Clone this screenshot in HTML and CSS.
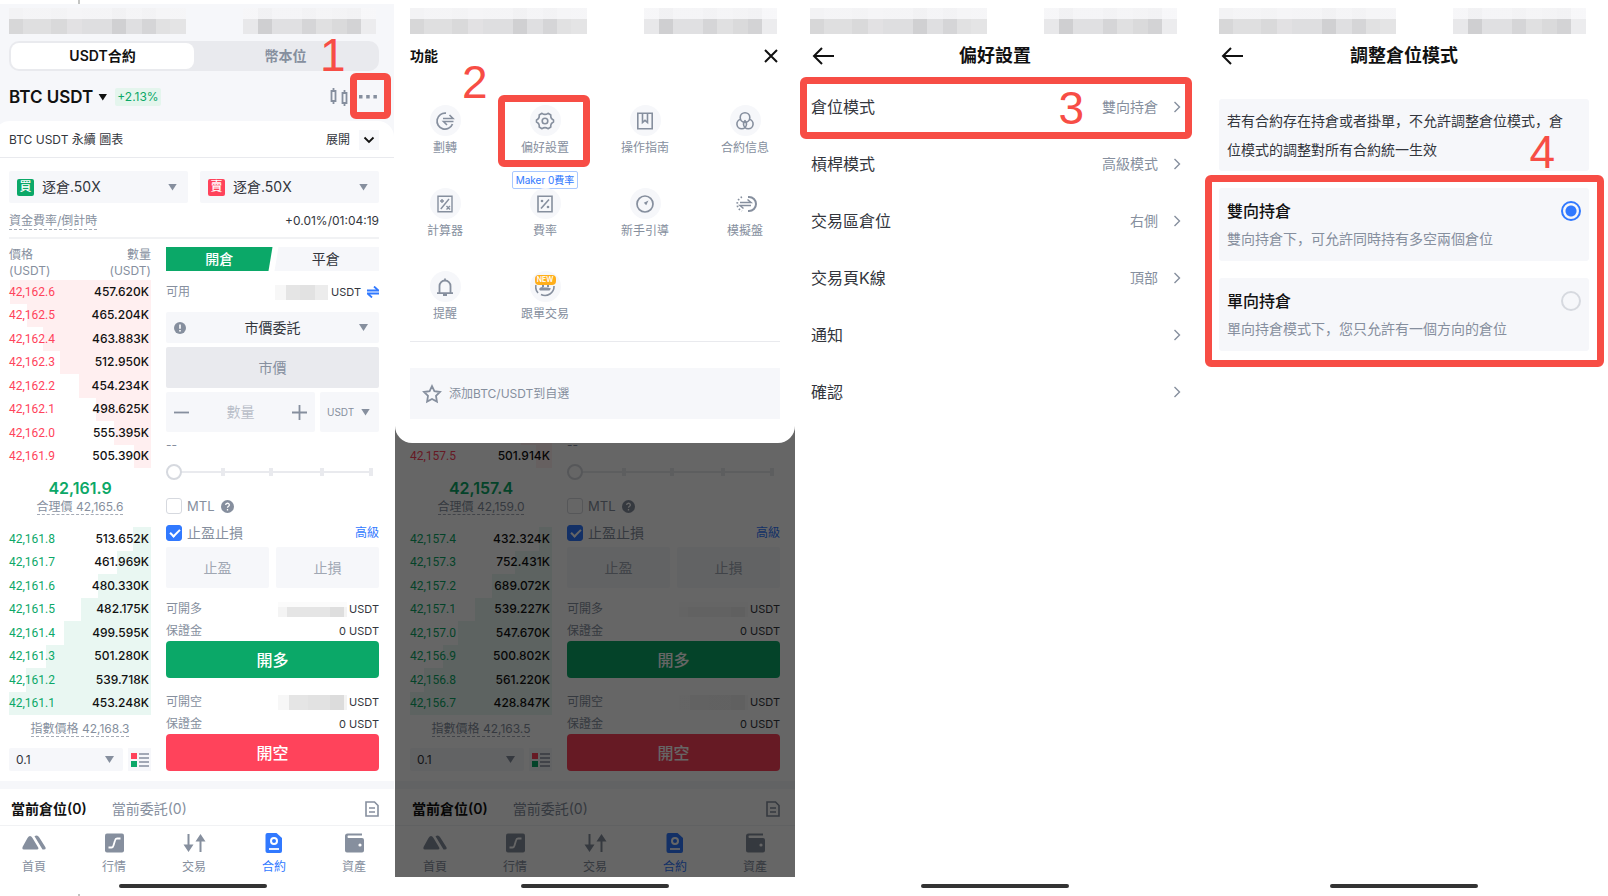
FILE: index.html
```html
<!DOCTYPE html>
<html lang="zh">
<head>
    <meta charset="UTF-8">
    <meta name="viewport" content="width=device-width, initial-scale=1.0">
    <title>調整倉位模式</title>
    <link rel="stylesheet" href="styles.css">
</head>
<body>
    <!-- Iconos -->
    <svg class="sprite" aria-hidden="true">
        <symbol id="i-candles" viewBox="0 0 20 18"><path d="M4.500 0v3M4.500 13v3M15.500 2v3M15.500 15v3M2.500 3h4v10h-4zM13.500 5h4v10h-4z" fill="none" stroke="currentColor" stroke-width="1.800"/></symbol>
        <symbol id="i-dots" viewBox="0 0 20 4"><path d="M1 0h3.500v3.500H1zM8.200 0h3.500v3.500H8.200zM15.400 0h3.500v3.500h-3.500z" fill="currentColor"/></symbol>
        <symbol id="i-down" viewBox="0 0 12 8"><path d="M1.500 1.500 6 6l4.500-4.500" fill="none" stroke="currentColor" stroke-width="1.800"/></symbol>
        <symbol id="i-right" viewBox="0 0 8 12"><path d="M1.500 1 6.500 6l-5 5" fill="none" stroke="currentColor" stroke-width="1.400"/></symbol>
        <symbol id="i-back" viewBox="0 0 22 18"><path d="M10 1 2 9l8 8M2 9h20" fill="none" stroke="currentColor" stroke-width="2"/></symbol>
        <symbol id="i-close" viewBox="0 0 14 14"><path d="M1 1l12 12M13 1 1 13" fill="none" stroke="currentColor" stroke-width="2"/></symbol>
        <symbol id="i-swap" viewBox="0 0 12 12"><path d="M0 4.500h11.500L7 .5M12 7.500H.5L5 11.500" fill="none" stroke="currentColor" stroke-width="1.800"/></symbol>
        <symbol id="i-info" viewBox="0 0 12 12"><circle cx="6" cy="6" r="6" fill="currentColor"/><path d="M6 2.500v4.200M6 8v1.600" stroke="#fff" stroke-width="1.600"/></symbol>
        <symbol id="i-help" viewBox="0 0 12 12"><circle cx="6" cy="6" r="6" fill="currentColor"/><path d="M4.300 4.700c0-2.300 3.400-2.200 3.400-.2C7.700 5.800 6 5.800 6 7.200M6 8.300v1.400" fill="none" stroke="#fff" stroke-width="1.200"/></symbol>
        <symbol id="i-minus" viewBox="0 0 15 15"><path d="M0 7.500h15" stroke="currentColor" stroke-width="1.800"/></symbol>
        <symbol id="i-plus" viewBox="0 0 15 15"><path d="M0 7.500h15M7.500 0v15" stroke="currentColor" stroke-width="1.800"/></symbol>
        <symbol id="i-book" viewBox="0 0 18 14"><path fill="#ff435b" d="M0 0h6v6H0z"/><path fill="#0ba868" d="M0 8h6v6H0z"/><path d="M8 1h10M8 5h10M8 9h10M8 13h10" stroke="#868f9e" stroke-width="1.400"/></symbol>
        <symbol id="i-doc" viewBox="0 0 14 16"><path d="M1 1h8.500L13 4.500V15H1zM4 7h6M4 11h6" fill="none" stroke="currentColor" stroke-width="1.600"/></symbol>
        <symbol id="i-home" viewBox="0 0 24 20"><path d="M5.500 5Q8 .8 10.500 5L16.200 14.500Q17 16.500 15 16.500H2Q-.5 16.500 .8 13.500zM12.500 3.200Q15.500 1.500 17.300 4.500l6 9.500q1.300 2.500-1.500 2.500h-1.300z" fill="currentColor"/></symbol>
        <symbol id="i-market" viewBox="0 0 24 20"><rect x="3" y=".5" width="19" height="19" rx="2" fill="currentColor"/><path d="M6.500 14.500h3q1.500 0 2-2l1.500-5q.5-2 2-2h3.500" fill="none" stroke="#fff" stroke-width="1.800"/></symbol>
        <symbol id="i-trade" viewBox="0 0 24 20"><path d="M6.500 1v12M18.500 19V7" stroke="currentColor" stroke-width="2"/><path d="M1.500 11.500h10l-5 7.500zM13.500 8.500h10L18.500 1z" fill="currentColor"/></symbol>
        <symbol id="i-futures" viewBox="0 0 24 20"><path d="M5.500 0h9L20 5v13q0 2-2 2H5.500q-2 0-2-2V2q0-2 2-2z" fill="currentColor"/><circle cx="12" cy="8" r="3" fill="none" stroke="#fff" stroke-width="2"/><path d="M7 16h10" stroke="#fff" stroke-width="1.800"/></symbol>
        <symbol id="i-assets" viewBox="0 0 24 20"><path d="M5.500.5H20v2H6.500q-1 0-1 1.200T6.500 5H20q2 0 2 2v10.500q0 2-2 2H5q-2 0-2-2V3Q3 .5 5.500.5z" fill="currentColor"/><circle cx="18" cy="12" r="1.600" fill="#fff"/></symbol>
        <symbol id="i-transfer" viewBox="0 0 20 20"><path d="M11 2.200A8 8 0 1 0 17.500 13" fill="none" stroke="currentColor" stroke-width="1.700"/><path d="M8 7.500h10L14.500 4M18.500 10.500h-10L12 14" fill="none" stroke="currentColor" stroke-width="1.600"/></symbol>
        <symbol id="i-gear" viewBox="0 0 20 20"><path d="M7 2.300Q10 4.500 13 2.300L15.800 4Q15.300 7.500 18.500 9v2Q15.300 12.500 15.800 16L13 17.700Q10 15.500 7 17.700L4.200 16Q4.700 12.500 1.500 11v-2Q4.700 7.500 4.200 4z" fill="none" stroke="currentColor" stroke-width="1.600" stroke-linejoin="round"/><circle cx="10" cy="10" r="2.800" fill="none" stroke="currentColor" stroke-width="1.600"/></symbol>
        <symbol id="i-guide" viewBox="0 0 20 20"><path d="M2.800 2.300h14.400v15.400H2.800zM7.500 2.500v9L10 9.300l2.500 2.200v-9" fill="none" stroke="currentColor" stroke-width="1.600"/></symbol>
        <symbol id="i-rings" viewBox="0 0 20 20"><g fill="none" stroke="currentColor" stroke-width="1.600"><circle cx="10" cy="6.500" r="4.800"/><path d="M5.800 8.300a4.800 4.800 0 1 0 5.700 5 4.800 4.800 0 0 0-2-4"/><path d="M14.200 8.300a4.800 4.800 0 1 1-5.700 5 4.800 4.800 0 0 1 2-4"/></g></symbol>
        <symbol id="i-calc" viewBox="0 0 20 20"><path d="M3 2.300h14v15.400H3zM5.800 15 14 5M5 7h4M7 5v4M11.500 12l3.500 3.500M15 12l-3.500 3.500" fill="none" stroke="currentColor" stroke-width="1.400"/></symbol>
        <symbol id="i-fee" viewBox="0 0 20 20"><path d="M3 2.300h14v15.400H3zM6 14.500l8-9" fill="none" stroke="currentColor" stroke-width="1.600"/><circle cx="7" cy="7" r="1.300" fill="currentColor"/><circle cx="13" cy="13" r="1.300" fill="currentColor"/></symbol>
        <symbol id="i-gauge" viewBox="0 0 20 20"><circle cx="10" cy="10" r="8" fill="none" stroke="currentColor" stroke-width="1.700"/><path d="m13.500 6.500-2.300 4.700-2.400-2.400z" fill="currentColor"/></symbol>
        <symbol id="i-demo" viewBox="0 0 24 20"><path d="M15 3h1a7 7 0 0 1 0 14h-1" fill="none" stroke="currentColor" stroke-width="2"/><path d="M9 3A7.500 7.500 0 0 0 9 17" fill="none" stroke="currentColor" stroke-width="1.800" stroke-dasharray="1.500 2"/><path d="M7 8.500h11l-3.500-3M18 11.500H7l3.500 3" fill="none" stroke="currentColor" stroke-width="1.500"/></symbol>
        <symbol id="i-bell" viewBox="0 0 20 20"><path d="M4.500 16v-7a5.500 5.500 0 0 1 11 0v7M2 16.200h16M10 1.500v2M8 18h4" fill="none" stroke="currentColor" stroke-width="1.800"/></symbol>
        <symbol id="i-copy" viewBox="0 0 20 20"><path d="M1 8a9 9 0 0 0 2 8M6 17.500A9 9 0 0 0 19 9" fill="none" stroke="currentColor" stroke-width="1.600"/><path d="M4 12q2-3 5-1.500h4l3 1-1.500 2H5zM7 8h2v2H7zM12 8h2v2h-2z" fill="currentColor"/></symbol>
        <symbol id="i-star" viewBox="0 0 20 20"><path d="m10 2.200 2.400 5 5.600.8-4 3.900.9 5.600-4.900-2.600-4.900 2.600.9-5.600-4-3.900 5.600-.8z" fill="none" stroke="currentColor" stroke-width="1.800"/></symbol>
    </svg>

    <!-- Pantalla de trading, se clona en los pasos 1 y 2 -->
    <template id="trade-template">
        <header class="trade-header">
            <div class="status"><span class="mosaic mosaic-left"></span><span class="mosaic mosaic-right"></span></div>
            <div class="segment">
                <button class="active">USDT合約</button>
                <button>幣本位</button>
            </div>
            <div class="pair">
                <button class="pair-name">BTC USDT<i class="caret"></i></button>
                <span class="change">+2.13%</span>
                <button class="pair-icon" aria-label="K線"><svg width="20" height="18"><use href="#i-candles"/></svg></button>
                <button class="pair-icon more" aria-label="更多"><svg width="20" height="4"><use href="#i-dots"/></svg></button>
            </div>
        </header>
        <div class="chart-bar">
            <span>BTC USDT 永續 圖表</span>
            <span class="expand">展開</span>
            <button class="expand-button" aria-label="展開圖表"><svg width="12" height="8"><use href="#i-down"/></svg></button>
        </div>
        <div class="modes">
            <label class="select-box mode"><b class="side buy">買</b><select aria-label="買"><option>逐倉.50X</option></select><i class="caret"></i></label>
            <label class="select-box mode"><b class="side sell">賣</b><select aria-label="賣"><option>逐倉.50X</option></select><i class="caret"></i></label>
        </div>
        <div class="funding"><span class="dashed">資金費率/倒計時</span><span>+0.01%/01:04:19</span></div>
        <div class="trade-grid">
            <section class="book">
                <div class="book-head"><span>價格<br>(USDT)</span><span>數量<br>(USDT)</span></div>
                <div class="rows asks"></div>
                <div class="last-price"></div>
                <div class="book-note"><span class="dashed fair"></span></div>
                <div class="rows bids"></div>
                <div class="book-note index-note"><span class="dashed index"></span></div>
                <div class="book-tools">
                    <label class="select-box"><select aria-label="精度"><option>0.1</option></select><i class="caret"></i></label>
                    <button class="book-view" aria-label="盤口"><svg width="18" height="14"><use href="#i-book"/></svg></button>
                </div>
            </section>
            <section class="order">
                <div class="order-tabs"><button class="active">開倉</button><button>平倉</button></div>
                <div class="line available"><span>可用</span><i class="mask wide-mask"></i><em>USDT</em><svg class="swap" width="12" height="12"><use href="#i-swap"/></svg></div>
                <label class="select-box order-type"><svg width="12" height="12"><use href="#i-info"/></svg><select aria-label="委託類型"><option>市價委託</option></select><i class="caret"></i></label>
                <input class="field market" type="text" placeholder="市價" aria-label="市價" disabled>
                <div class="quantity">
                    <div class="stepper">
                        <button aria-label="減少"><svg width="15" height="15"><use href="#i-minus"/></svg></button>
                        <input type="text" placeholder="數量" aria-label="數量">
                        <button aria-label="增加"><svg width="15" height="15"><use href="#i-plus"/></svg></button>
                    </div>
                    <label class="select-box unit"><select aria-label="單位"><option>USDT</option></select><i class="caret"></i></label>
                </div>
                <div class="estimate">--</div>
                <input class="slider" type="range" min="0" max="100" value="0" aria-label="倉位比例">
                <div class="check-row"><label><input type="checkbox">MTL</label><svg width="13" height="13"><use href="#i-help"/></svg></div>
                <div class="check-row tpsl"><label><input type="checkbox" checked>止盈止損</label><a href="#">高級</a></div>
                <div class="tpsl-fields"><input class="field" type="text" placeholder="止盈" aria-label="止盈"><input class="field" type="text" placeholder="止損" aria-label="止損"></div>
                <div class="line can-open"><span>可開多</span><i class="mask"></i><em>USDT</em></div>
                <div class="line margin"><span>保證金</span><em>0 USDT</em></div>
                <button class="submit long">開多</button>
                <div class="line can-short"><span>可開空</span><i class="mask"></i><em>USDT</em></div>
                <div class="line margin"><span>保證金</span><em>0 USDT</em></div>
                <button class="submit short">開空</button>
            </section>
        </div>
        <div class="positions">
            <button class="active">當前倉位(0)</button>
            <button>當前委託(0)</button>
            <button class="history" aria-label="歷史"><svg width="14" height="16"><use href="#i-doc"/></svg></button>
        </div>
        <nav class="tabbar">
            <a href="#"><svg width="24" height="20"><use href="#i-home"/></svg>首頁</a>
            <a href="#"><svg width="24" height="20"><use href="#i-market"/></svg>行情</a>
            <a href="#"><svg width="24" height="20"><use href="#i-trade"/></svg>交易</a>
            <a href="#" class="active"><svg width="24" height="20"><use href="#i-futures"/></svg>合約</a>
            <a href="#"><svg width="24" height="20"><use href="#i-assets"/></svg>資產</a>
        </nav>
    </template>

    <main class="steps">
        <section class="step step-1">
            <div class="trade" data-book="first"></div>
            <div class="home-bar"></div>
        </section>

        <section class="step step-2">
            <div class="trade dimmed" data-book="second"></div>
            <div class="sheet">
                <div class="status"><span class="mosaic mosaic-left"></span><span class="mosaic mosaic-right"></span></div>
                <div class="sheet-head"><h2>功能</h2><button aria-label="關閉"><svg width="14" height="14"><use href="#i-close"/></svg></button></div>
                <div class="functions">
                    <a href="#"><span class="circle"><svg width="20" height="20"><use href="#i-transfer"/></svg></span>劃轉</a>
                    <a href="#"><span class="circle"><svg width="20" height="20"><use href="#i-gear"/></svg></span>偏好設置<span class="highlight"></span><span class="number">2</span></a>
                    <a href="#"><span class="circle"><svg width="20" height="20"><use href="#i-guide"/></svg></span>操作指南</a>
                    <a href="#"><span class="circle"><svg width="20" height="20"><use href="#i-rings"/></svg></span>合約信息</a>
                    <a href="#"><span class="circle"><svg width="20" height="20"><use href="#i-calc"/></svg></span>計算器</a>
                    <a href="#"><span class="tag">Maker 0費率</span><span class="circle"><svg width="20" height="20"><use href="#i-fee"/></svg></span>費率</a>
                    <a href="#"><span class="circle"><svg width="20" height="20"><use href="#i-gauge"/></svg></span>新手引導</a>
                    <a href="#"><span class="circle plain"><svg width="24" height="20"><use href="#i-demo"/></svg></span>模擬盤</a>
                    <a href="#"><span class="circle"><svg width="20" height="20"><use href="#i-bell"/></svg></span>提醒</a>
                    <a href="#"><span class="circle"><svg width="20" height="20"><use href="#i-copy"/></svg><span class="new">NEW</span></span>跟單交易</a>
                </div>
                <button class="favorite"><svg width="20" height="20"><use href="#i-star"/></svg>添加BTC/USDT到自選</button>
            </div>
            <div class="home-bar"></div>
        </section>

        <section class="step step-3">
            <div class="status"><span class="mosaic mosaic-left"></span><span class="mosaic mosaic-right"></span></div>
            <div class="title-bar"><button aria-label="返回"><svg width="22" height="18"><use href="#i-back"/></svg></button><h1>偏好設置</h1></div>
            <div class="settings">
                <a href="#">倉位模式<span>雙向持倉</span><svg width="8" height="12"><use href="#i-right"/></svg><i class="highlight"></i><i class="number">3</i></a>
                <a href="#">槓桿模式<span>高級模式</span><svg width="8" height="12"><use href="#i-right"/></svg></a>
                <a href="#">交易區倉位<span>右側</span><svg width="8" height="12"><use href="#i-right"/></svg></a>
                <a href="#">交易頁K線<span>頂部</span><svg width="8" height="12"><use href="#i-right"/></svg></a>
                <a href="#">通知<span></span><svg width="8" height="12"><use href="#i-right"/></svg></a>
                <a href="#">確認<span></span><svg width="8" height="12"><use href="#i-right"/></svg></a>
            </div>
            <div class="home-bar"></div>
        </section>

        <section class="step step-4">
            <div class="status"><span class="mosaic mosaic-left"></span><span class="mosaic mosaic-right"></span></div>
            <div class="title-bar"><button aria-label="返回"><svg width="22" height="18"><use href="#i-back"/></svg></button><h1>調整倉位模式</h1></div>
            <p class="note">若有合約存在持倉或者掛單，不允許調整倉位模式，倉位模式的調整對所有合約統一生效</p>
            <div class="options">
                <label class="option"><strong>雙向持倉</strong><input type="radio" name="position-mode" checked><small>雙向持倉下，可允許同時持有多空兩個倉位</small></label>
                <label class="option"><strong>單向持倉</strong><input type="radio" name="position-mode"><small>單向持倉模式下，您只允許有一個方向的倉位</small></label>
                <i class="highlight"></i><i class="number">4</i>
            </div>
            <div class="home-bar"></div>
        </section>
    </main>
    <script src="script.js"></script>
</body>
</html>
```
FILE: styles.css
```css
* {
    box-sizing: border-box;
}

body {
    margin: 0;
    background: #fff;
    color: #33363d;
    font-family: Inter, "Noto Sans CJK SC", sans-serif;
    font-size: 12px;
    line-height: 16px;
}

button, input, select {
    font: inherit;
    color: inherit;
    background: none;
    border: none;
    margin: 0;
    padding: 0;
    border-radius: 0;
}

button {
    cursor: pointer;
}

select {
    appearance: none;
}

a {
    color: inherit;
    text-decoration: none;
}

i, em {
    font-style: normal;
}

h1, h2, p {
    margin: 0;
}

svg {
    display: block;
    flex: none;
}

.sprite {
    position: absolute;
    width: 0;
    height: 0;
}

.steps {
    display: grid;
    grid-template-columns: minmax(0, 395fr) minmax(0, 400fr) minmax(0, 409fr) minmax(0, 404fr);
    min-height: 100vh;
}

.step {
    position: relative;
    display: flex;
    flex-direction: column;
    padding-top: 4px;
    overflow: hidden;
}

/* La primera captura viene recortada por la izquierda */
.step-1 > * {
    margin-left: -6px;
    margin-right: 1px;
}

.step-1::before,
.step-1::after {
    content: "";
    position: absolute;
    left: 78px;
    top: 0;
    width: 2px;
    height: 4px;
    background: #c4c5c3;
}

.step-1::after {
    top: auto;
    bottom: 0;
    height: 2px;
}

.step-3 {
    padding-right: 9px;
}

.step-4 {
    padding-right: 4px;
}

.home-bar {
    width: 148px;
    height: 4px;
    margin: auto auto 8px;
    border-radius: 2px;
    background: #333;
}

.step-1 > .home-bar {
    margin: auto auto 8px 119px;
}

/* Barra de estado pixelada */
.status {
    display: flex;
    justify-content: space-between;
    padding: 4px 18px 0 15px;
}

.mosaic {
    height: 26px;
    background:
        linear-gradient(rgba(250, 250, 252, 0.8) 11px, transparent 11px),
        linear-gradient(90deg, #d7d7d8 8%, #dfdfe0 8% 24%, #d9d9da 24% 33%, #e2e1e3 33% 41%, #dedee0 41% 58%, #d0d0d2 58% 66%, #dfdfe1 66% 75%, #d5d5d7 75% 83%, #e1e1e2 83% 91%, #e4e4e5 91%);
}

.mosaic-left {
    width: 177px;
}

.mosaic-right {
    width: 133px;
    background:
        linear-gradient(rgba(250, 250, 252, 0.8) 11px, transparent 11px),
        linear-gradient(90deg, #e8e8ea 11%, #cfcfd1 11% 22%, #e0e0e2 22% 44%, #d5d5d7 44% 55%, #e0e0e1 55% 67%, #dadadb 67% 78%, #d3d3d5 78% 89%, #ececee 89%);
}

/* Marcas rojas */
.highlight {
    position: absolute;
    border: 7px solid #f74d45;
    border-radius: 6px;
    pointer-events: none;
}

.number {
    position: absolute;
    color: #f74d45;
    font: 46px/46px "Liberation Sans", sans-serif;
}

.caret {
    width: 9px;
    height: 7px;
    background: #868f9e;
    clip-path: polygon(0 0, 100% 0, 50% 100%);
    flex: none;
}

/* Pantalla de trading */
.trade {
    position: relative;
    background: #fff;
}

.dimmed::after {
    content: "";
    position: absolute;
    inset: 0;
    background: rgba(0, 0, 0, 0.6);
}

/* Lo que tapa el menú no se pinta */
.dimmed .trade-header,
.dimmed .chart-bar,
.dimmed .modes,
.dimmed .funding,
.dimmed .book-head,
.dimmed .order-tabs,
.dimmed .available,
.dimmed .order-type,
.dimmed .market,
.dimmed .quantity {
    visibility: hidden;
}

.trade-header {
    background: #f6f7fa;
    height: 133px;
}

.segment {
    display: flex;
    height: 30px;
    margin: 7px 15px 0;
    padding: 2px;
    border-radius: 10px;
    background: #e9eaee;
    font-size: 14px;
    font-weight: 600;
    color: #868f9e;
}

.segment button {
    flex: 1;
    border-radius: 8px;
}

.segment .active {
    background: #fff;
    color: #111;
}

.pair {
    display: flex;
    align-items: center;
    height: 52px;
    padding: 0 16px 0 15px;
}

.pair-name {
    display: flex;
    align-items: center;
    gap: 5px;
    font-size: 17px;
    font-weight: 600;
    color: #111;
}

.pair-name .caret {
    background: #111;
}

.change {
    margin-left: 8px;
    margin-right: auto;
    padding: 1px 2px;
    border-radius: 2px;
    background: #e4f5ed;
    color: #0ba868;
}

.pair-icon {
    color: #868f9e;
}

.more {
    position: relative;
    margin-left: 9px;
}

.more .highlight {
    inset: -22px -13px -20px -8px;
}

.more .number {
    left: -38px;
    top: -63px;
}

.chart-bar {
    display: flex;
    align-items: center;
    height: 37px;
    margin-top: -16px;
    padding: 2px 15px 0;
    border-bottom: 1px solid #e9eaee;
    border-radius: 16px 16px 0 0;
    background: #fff;
}

.expand {
    margin-left: auto;
}

.expand-button {
    display: grid;
    place-items: center;
    width: 20px;
    height: 20px;
    margin-left: 9px;
    background: #f6f7fa;
    color: #111;
}

.select-box {
    display: flex;
    align-items: center;
    background: #f6f7fa;
    border-radius: 2px;
}

.select-box select {
    flex: 1;
    min-width: 0;
}

.modes {
    display: grid;
    grid-template-columns: 1fr 1fr;
    gap: 12px;
    padding: 13px 15px 0;
}

.mode {
    height: 32px;
    padding: 0 11px 0 8px;
    gap: 8px;
    font-size: 14px;
}

.side {
    width: 17px;
    height: 17px;
    border-radius: 2px;
    color: #fff;
    font-size: 12px;
    font-weight: 500;
    text-align: center;
}

.buy {
    background: #0ba868;
}

.sell {
    background: #ff435b;
}

.funding {
    display: flex;
    justify-content: space-between;
    margin: 10px 15px 0;
    padding-bottom: 7px;
    border-bottom: 2px solid #f1f2f4;
}

.dashed {
    border-bottom: 1px dashed #a5abb6;
    color: #868f9e;
}

.trade-grid {
    display: grid;
    grid-template-columns: minmax(0, 142fr) minmax(0, 213fr);
    gap: 15px;
    padding: 8px 15px 10px;
}

.book-head {
    display: flex;
    justify-content: space-between;
    margin-bottom: 1px;
    color: #868f9e;
}

.book-head span:last-child {
    text-align: right;
}

.rows {
    display: flex;
    flex-direction: column;
    height: 188px;
}

.book-row {
    flex: 1;
    position: relative;
    display: flex;
    justify-content: space-between;
    align-items: center;
    padding-right: 2px;
    color: #111;
    font-weight: 500;
}

.book-row span {
    position: relative;
}

.book-row .price {
    font-family: Roboto, sans-serif;
    font-weight: 400;
}

.depth {
    position: absolute;
    right: 0;
    top: 0;
    bottom: 0;
}

.asks .price {
    color: #ff435b;
}

.asks .depth {
    background: #ffeff0;
}

.bids .price {
    color: #0ba868;
}

.bids .depth {
    background: #e9f7f2;
}

.last-price {
    margin-top: 10px;
    color: #0ba868;
    font-size: 16px;
    font-weight: 600;
    line-height: 20px;
    text-align: center;
}

.book-note {
    height: 16px;
    margin-top: 1px;
    margin-bottom: 12px;
    text-align: center;
}

.index-note {
    margin-top: 6px;
    margin-bottom: 11px;
}

.book-tools {
    display: flex;
    gap: 5px;
}

.book-tools .select-box {
    flex: 1;
    min-width: 0;
    height: 23px;
    padding: 0 9px 0 7px;
}

.book-view {
    display: grid;
    place-items: center;
    width: 23px;
    background: #f6f7fa;
}

.order {
    display: flex;
    flex-direction: column;
}

.order-tabs {
    display: grid;
    grid-template-columns: 1fr 1fr;
    height: 24px;
    font-size: 14px;
}

.order-tabs button {
    background: #f6f7fa;
    clip-path: polygon(6px 0, 100% 0, 100% 100%, 2px 100%);
}

.order-tabs .active {
    background: #0ba868;
    color: #fff;
    font-weight: 500;
    clip-path: polygon(0 0, 100% 0, calc(100% - 4px) 100%, 0 100%);
}

.line {
    display: flex;
    align-items: center;
    height: 16px;
}

.line span {
    margin-right: auto;
    color: #868f9e;
}

.line em {
    font-size: 11px;
}

.available {
    margin: 13px 0 12px;
}

.mask {
    width: 69px;
    height: 15px;
    margin-right: 2px;
    background: linear-gradient(90deg, #f7f7f7 16%, #e5e5e5 16% 44%, #e2e2e2 44% 76%, #dcdcdc 76% 96%, #f3f3f3 96%);
}

.can-open .mask {
    background: linear-gradient(#fbfbfb 5px, transparent 5px), linear-gradient(90deg, #f4f4f4 13%, #e5e5e5 13% 76%, #dedede 76% 96%, #f3f3f3 96%);
}

.wide-mask {
    width: 53px;
    margin-right: 3px;
    background: linear-gradient(90deg, #f7f7f7 20%, #e5e5e5 20% 48%, #e2e2e2 48% 76%, #ececec 76%);
}

.dimmed .mask {
    opacity: 0.4;
}

.swap {
    margin-left: 6px;
    color: #3179ff;
}

.order-type {
    height: 31px;
    padding: 0 11px 0 8px;
    font-size: 14px;
    color: #868f9e;
}

.order-type select {
    color: #33363d;
    text-align: center;
    text-align-last: center;
}

.field {
    width: 100%;
    min-width: 0;
    height: 41px;
    border-radius: 2px;
    background: #f6f7fa;
    font-size: 14px;
    text-align: center;
}

.field::placeholder {
    color: #a0a7b3;
}

.market {
    margin: 4px 0;
    background: #e9eaee;
}

.market::placeholder {
    color: #868f9e;
}

.quantity {
    display: flex;
    gap: 5px;
    height: 40px;
}

.stepper {
    flex: 1;
    display: flex;
    align-items: center;
    min-width: 0;
    padding: 0 8px;
    border-radius: 2px;
    background: #f6f7fa;
    color: #868f9e;
}

.stepper input {
    flex: 1;
    min-width: 0;
    font-size: 14px;
    text-align: center;
}

.stepper input::placeholder {
    color: #b9bec8;
}

.unit {
    flex: none;
    width: 59px;
    padding: 0 9px 0 7px;
    color: #868f9e;
    font-size: 10px;
}

.estimate {
    margin-top: 5px;
    color: #868f9e;
}

.slider {
    appearance: none;
    width: 97%;
    height: 16px;
    margin: 11px 0 18px;
    background:
        linear-gradient(#e9eaee, #e9eaee) 27% 50% / 4px 8px no-repeat,
        linear-gradient(#e9eaee, #e9eaee) 51% 50% / 4px 8px no-repeat,
        linear-gradient(#e9eaee, #e9eaee) 76% 50% / 4px 8px no-repeat,
        linear-gradient(#e9eaee, #e9eaee) 100% 50% / 4px 8px no-repeat,
        linear-gradient(#e9eaee, #e9eaee) 0 50% / 100% 2px no-repeat;
}

.slider::-webkit-slider-thumb {
    appearance: none;
    width: 16px;
    height: 16px;
    border: 2px solid #d6d9df;
    border-radius: 50%;
    background: #fff;
}

.check-row {
    display: flex;
    align-items: center;
    gap: 6px;
    height: 16px;
    color: #868f9e;
    font-size: 13px;
}

.check-row label {
    display: flex;
    align-items: center;
    gap: 5px;
}

.check-row input {
    appearance: none;
    width: 16px;
    height: 16px;
    border: 1px solid #d6d9df;
    border-radius: 3px;
}

.check-row input:checked {
    position: relative;
    border-color: #3179ff;
    background: #3179ff;
}

.check-row input:checked::after {
    content: "";
    position: absolute;
    left: 3px;
    top: 3px;
    width: 8px;
    height: 4px;
    border: solid #fff;
    border-width: 0 0 2px 2px;
    transform: rotate(-45deg);
}

.tpsl {
    margin: 11px 0 6px;
    font-size: 14px;
}

.tpsl a {
    margin-left: auto;
    color: #3179ff;
    font-size: 12px;
}

.tpsl-fields {
    display: grid;
    grid-template-columns: 1fr 1fr;
    gap: 7px;
}

.can-open {
    margin: 13px 0 6px;
}

.can-short {
    margin: 16px 0 6px;
}

.submit {
    height: 37px;
    margin-top: 2px;
    border-radius: 4px;
    color: #fff;
    font-size: 16px;
    font-weight: 500;
}

.long {
    background: #0ba868;
}

.short {
    background: #ff435b;
}

.positions {
    display: flex;
    align-items: center;
    gap: 25px;
    height: 45px;
    padding: 4px 15px 0 17px;
    border-top: 8px solid #f6f7fa;
    border-bottom: 1px solid #f1f2f4;
    color: #868f9e;
    font-size: 14px;
}

.positions .active {
    color: #111;
    font-weight: 600;
}

.history {
    margin-left: auto;
}

.tabbar {
    display: grid;
    grid-template-columns: repeat(5, 1fr);
    padding: 7px 0 2px;
    color: #868f9e;
}

.tabbar a {
    display: flex;
    flex-direction: column;
    align-items: center;
    gap: 6px;
}

.tabbar .active {
    color: #3179ff;
}

/* Menu de funciones */
.sheet {
    position: absolute;
    left: 0;
    right: 0;
    top: 0;
    padding: 4px 0 24px;
    border-radius: 0 0 17px 17px;
    background: #fff;
}

.sheet-head {
    display: flex;
    justify-content: space-between;
    align-items: center;
    height: 43px;
    padding: 0 17px 0 15px;
    color: #111;
}

.sheet-head h2 {
    font-size: 14px;
    font-weight: 600;
}

.functions {
    position: relative;
    display: grid;
    grid-template-columns: repeat(4, 1fr);
    grid-auto-rows: 83px;
    padding-bottom: 16px;
    color: #868f9e;
}

.functions::after {
    content: "";
    position: absolute;
    left: 15px;
    right: 15px;
    bottom: 0;
    height: 1px;
    background: #e9eaee;
}

.functions a {
    position: relative;
    display: flex;
    flex-direction: column;
    align-items: center;
    gap: 4px;
    padding-top: 28px;
}

.circle {
    position: relative;
    display: grid;
    place-items: center;
    width: 31px;
    height: 31px;
    border-radius: 50%;
    background: #f6f7fa;
}

.plain {
    background: none;
}

.functions .highlight {
    inset: 18px 5px -7px 3px;
}

.functions .number {
    left: -33px;
    top: -18px;
}

.tag {
    position: absolute;
    top: 11px;
    padding: 0 3px;
    border: 1px solid #a9c8ff;
    border-radius: 2px;
    color: #3179ff;
    font-size: 10px;
    white-space: nowrap;
}

.new {
    position: absolute;
    top: 4px;
    left: 5px;
    width: 21px;
    border-radius: 4px;
    background: #ffae1a;
    color: #fff;
    font-size: 7px;
    font-weight: 600;
    line-height: 10px;
    text-align: center;
}

.favorite {
    display: flex;
    align-items: center;
    gap: 7px;
    width: calc(100% - 30px);
    height: 51px;
    margin: 26px 15px 0;
    padding: 0 12px;
    background: #f6f7fa;
    color: #868f9e;
}

/* Ajustes */
.title-bar {
    display: grid;
    grid-template-columns: 22px 1fr 22px;
    align-items: center;
    height: 44px;
    padding: 0 17px;
    color: #111;
}

.title-bar h1 {
    font-size: 18px;
    font-weight: 600;
    text-align: center;
}

.settings a {
    position: relative;
    display: flex;
    align-items: center;
    height: 57px;
    padding: 0 14px 0 16px;
    font-size: 16px;
}

.settings span {
    margin-left: auto;
    margin-right: 15px;
    font-size: 14px;
    color: #868f9e;
}

.settings svg {
    color: #868f9e;
}

.settings .highlight {
    inset: -1px 3px -4px 5px;
}

.settings .number {
    right: 111px;
    top: 7px;
}

.note {
    margin: 21px 15px 0;
    padding: 7px 16px 7px 8px;
    border-radius: 3px;
    background: #f6f7fa;
    font-size: 14px;
    line-height: 29px;
}

.options {
    position: relative;
    display: grid;
    gap: 17px;
    margin: 17px 15px 0;
}

.option {
    display: grid;
    grid-template-columns: 1fr 20px;
    align-items: center;
    padding: 9px 8px 8px;
    border-radius: 3px;
    background: #f6f7fa;
    line-height: 28px;
}

.option strong {
    color: #111;
    font-size: 16px;
    font-weight: 500;
}

.option small {
    color: #868f9e;
    font-size: 14px;
}

.option input {
    appearance: none;
    width: 20px;
    height: 20px;
    border: 2px solid #d6d9df;
    border-radius: 50%;
}

.option input:checked {
    border-color: #3179ff;
    background: radial-gradient(circle, #3179ff 5px, transparent 6px);
}

.options .highlight {
    inset: -13px -15px -16px -14px;
}

.options .number {
    right: 34px;
    top: -59px;
}
```
FILE: script.js
```js
// [precio, cantidad, profundidad en %]
const books = {
    first: {
        asks: [
            ['42,162.6', '457.620K', 99],
            ['42,162.5', '465.204K', 87],
            ['42,162.4', '463.883K', 76],
            ['42,162.3', '512.950K', 64],
            ['42,162.2', '454.234K', 51],
            ['42,162.1', '498.625K', 39],
            ['42,162.0', '555.395K', 26],
            ['42,161.9', '505.390K', 12]
        ],
        bids: [
            ['42,161.8', '513.652K', 13],
            ['42,161.7', '461.969K', 24],
            ['42,161.6', '480.330K', 37],
            ['42,161.5', '482.175K', 49],
            ['42,161.4', '499.595K', 61],
            ['42,161.3', '501.280K', 74],
            ['42,161.2', '539.718K', 88],
            ['42,161.1', '453.248K', 100]
        ],
        last: '42,161.9',
        fair: '合理價 42,165.6',
        index: '指數價格 42,168.3'
    },
    second: {
        // las filas vacías quedan debajo del menú
        asks: [
            ['', '', 0], ['', '', 0], ['', '', 0], ['', '', 0], ['', '', 0], ['', '', 0],
            ['', '', 22],
            ['42,157.5', '501.914K', 11]
        ],
        bids: [
            ['42,157.4', '432.324K', 9],
            ['42,157.3', '752.431K', 26],
            ['42,157.2', '689.072K', 42],
            ['42,157.1', '539.227K', 54],
            ['42,157.0', '547.670K', 66],
            ['42,156.9', '500.802K', 77],
            ['42,156.8', '561.220K', 90],
            ['42,156.7', '428.847K', 100]
        ],
        last: '42,157.4',
        fair: '合理價 42,159.0',
        index: '指數價格 42,163.5'
    }
};

function renderRows(container, rows) {
    container.innerHTML = rows.map(([price, amount, depth]) =>
        `<div class="book-row"><i class="depth" style="width: ${depth}%"></i><span class="price">${price}</span><span>${amount}</span></div>`
    ).join('');
}

document.querySelectorAll('.trade').forEach(trade => {
    const book = books[trade.dataset.book];
    trade.appendChild(document.getElementById('trade-template').content.cloneNode(true));
    renderRows(trade.querySelector('.asks'), book.asks);
    renderRows(trade.querySelector('.bids'), book.bids);
    trade.querySelector('.last-price').textContent = book.last;
    trade.querySelector('.fair').textContent = book.fair;
    trade.querySelector('.index').textContent = book.index;
});

// Marca del paso 1
document.querySelector('.step-1 .more').insertAdjacentHTML('beforeend', '<i class="highlight"></i><i class="number">1</i>');
```
